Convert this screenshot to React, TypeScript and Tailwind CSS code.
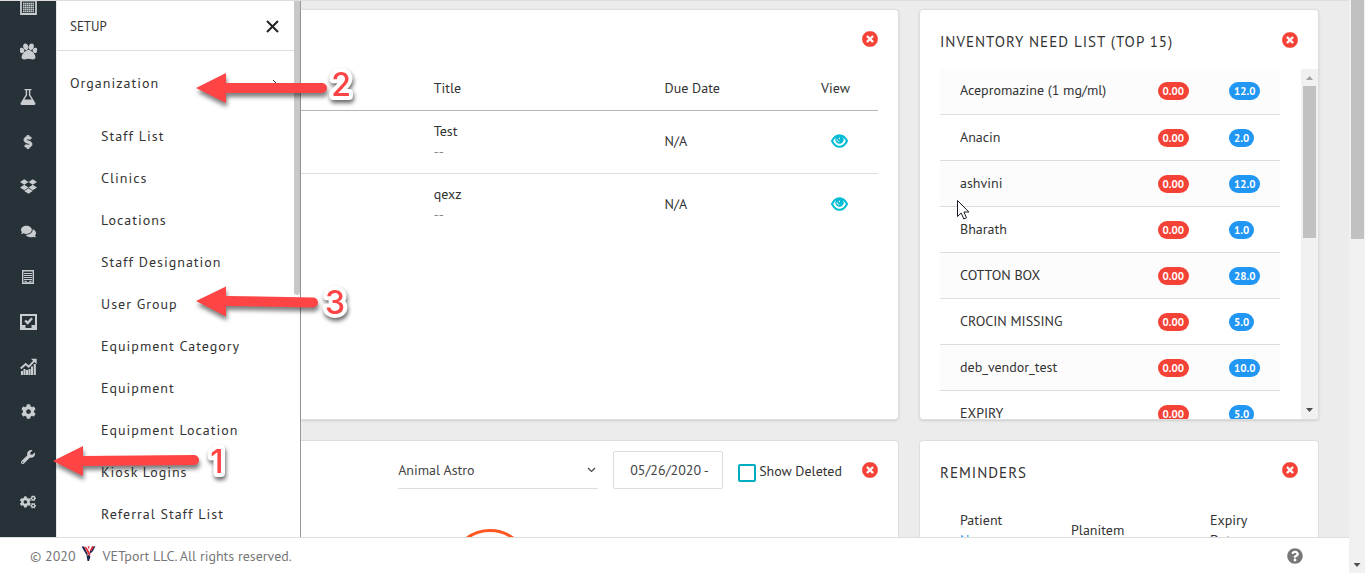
import React, { useState } from "react";
import {
  FaPaw,
  FaDollarSign,
  FaDropbox,
  FaComments,
  FaCog,
  FaWrench,
  FaCogs,
  FaTimesCircle,
  FaQuestionCircle,
} from "react-icons/fa";

const setupItems = [
  "Staff List",
  "Clinics",
  "Locations",
  "Staff Designation",
  "User Group",
  "Equipment Category",
  "Equipment",
  "Equipment Location",
  "Kiosk Logins",
  "Referral Staff List",
];

const tasks = [
  { title: "Test", note: "--", due: "N/A" },
  { title: "qexz", note: "--", due: "N/A" },
];

const inventory = [
  { name: "Acepromazine (1 mg/ml)", stock: "0.00", need: "12.0" },
  { name: "Anacin", stock: "0.00", need: "2.0" },
  { name: "ashvini", stock: "0.00", need: "12.0" },
  { name: "Bharath", stock: "0.00", need: "1.0" },
  { name: "COTTON BOX", stock: "0.00", need: "28.0" },
  { name: "CROCIN MISSING", stock: "0.00", need: "5.0" },
  { name: "deb_vendor_test", stock: "0.00", need: "10.0" },
  { name: "EXPIRY", stock: "0.00", need: "5.0" },
];

function CalendarIcon() {
  return (
    <svg width="17" height="17" viewBox="0 0 17 17" fill="none" stroke="currentColor">
      <path d="M1 2.500h15v13.500H1z" strokeWidth="1.800" />
      <path d="M4.500 0v3M12.500 0v3" strokeWidth="2" />
      <path
        d="M3 5.500h11M3 7.500h11M3 9.500h11M3 11.500h11M3 13.500h11"
        strokeWidth="1.400"
        strokeDasharray="1.600 .4"
      />
    </svg>
  );
}

function FlaskIcon() {
  return (
    <svg width="16" height="16" viewBox="0 0 16 16" fill="currentColor" fillRule="evenodd">
      <path d="M4.500 0h7v1.300h-1.200v4.500l4.900 7.900c.7 1.200.2 2.300-1.200 2.300H2c-1.400 0-1.900-1.100-1.200-2.300l4.900-7.900V1.300H4.500V0zm2.600 1.300v4.900L4.400 10.500h7.200L8.900 6.200V1.300H7.100z" />
    </svg>
  );
}

function BuildingIcon() {
  return (
    <svg width="12" height="14" viewBox="0 0 12 14" fill="none" stroke="currentColor">
      <path d="M.7.7h10.600v12.600H.7z" strokeWidth="1.400" />
      <path d="M2 3.500h8M2 5.500h8M2 7.500h8M2 9.500h8" strokeWidth="1" />
      <path d="M2.500 11.500h2M7.500 11.500h2M4 13h4" strokeWidth="1.500" />
    </svg>
  );
}

function InboxIcon() {
  return (
    <svg width="17" height="16" viewBox="0 0 17 16" fill="none" stroke="currentColor">
      <path d="M1 1h15v14H1z" strokeWidth="2" />
      <path d="M2 11h3.500v3h6v-3H15v4H2z" fill="currentColor" stroke="none" />
      <path d="M5.200 6.500l2.500 2.500 4.300-4.800" strokeWidth="2.400" />
    </svg>
  );
}

function ChartIcon() {
  return (
    <svg width="17" height="17" viewBox="0 0 17 17" fill="none" stroke="currentColor">
      <path
        d="M2 17v-4M4.500 17v-6M7 17v-5M9.500 17v-6M12 17V8.500M14.800 17V6"
        strokeWidth="2.100"
      />
      <path d="M.7 10.500l5-4.500 3 2.700L14 3.200" strokeWidth="1.900" />
      <path d="M11 .8h5.700v5.400z" fill="currentColor" stroke="none" />
    </svg>
  );
}

function EyeIcon() {
  return (
    <svg width="17" height="14" viewBox="0 0 17 14" fill="none" stroke="currentColor">
      <path
        d="M1 7C3 3 5.500 1.200 8.500 1.200S14 3 16 7c-2 4-4.500 5.800-7.500 5.800S3 11 1 7z"
        strokeWidth="2"
      />
      <circle cx="8.500" cy="5.600" r="4.200" fill="currentColor" stroke="none" />
      <path d="M6 5.200c.2 1.700 1 2.300 2.300 2.500" stroke="#fff" strokeWidth="1" />
      <path d="M8.500 3.700v1.500" stroke="#fff" strokeWidth="1" />
    </svg>
  );
}

function LogoIcon() {
  return (
    <svg width="15" height="15" viewBox="0 0 15 15">
      <path d="M.5.500h2.500L7 8.500 5.500 9z" fill="#20264f" />
      <path d="M14.500 0L11 1 8.500 6l1 1.500L12 5z" fill="#20264f" />
      <path d="M3 .5l2.500.7L9.500 8 8.500 10.500z" fill="#e5303c" />
      <path d="M6.500 0l2 .5L8 4zM11 0l2 .5-3 5-1-1z" fill="#e5303c" />
      <path d="M5.500 9.500L7.500 9l2 1.500L8 15H6.500z" fill="#20264f" />
    </svg>
  );
}

const navItems = [
  { label: "Calendar", icon: <CalendarIcon /> },
  { label: "Patients", icon: <FaPaw size={17} strokeWidth={36} /> },
  { label: "Lab", icon: <FlaskIcon /> },
  { label: "Billing", icon: <FaDollarSign size={14} strokeWidth={36} /> },
  { label: "Inventory", icon: <FaDropbox size={17} /> },
  { label: "Messages", icon: <FaComments size={15} /> },
  { label: "Clinic", icon: <BuildingIcon /> },
  { label: "Tasks", icon: <InboxIcon /> },
  { label: "Reports", icon: <ChartIcon /> },
  { label: "Settings", icon: <FaCog size={15} /> },
  { label: "Setup", icon: <FaWrench size={14} /> },
  { label: "Admin", icon: <FaCogs size={16} /> },
];

function CloseButton() {
  return (
    <button type="button" aria-label="Remove widget" className="shrink-0 text-[#f44336]">
      <FaTimesCircle size={16} strokeWidth={12} />
    </button>
  );
}

function Badge(props: { value: string; tone: "red" | "blue" }) {
  return (
    <span
      className={
        props.tone === "red"
          ? "inline-block h-[18px] rounded-full bg-[#f44336] px-[5px] text-[11px] leading-[18px] font-bold text-white"
          : "inline-block h-[18px] rounded-full bg-[#2196f3] px-[5px] text-[11px] leading-[18px] font-bold text-white"
      }
    >
      {props.value}
    </span>
  );
}

function Sidebar() {
  return (
    <nav className="w-14 shrink-0 overflow-hidden bg-[#263238] text-[#c9cdcf]">
      <ul className="-mt-[17px]">
        {navItems.map((item) => (
          <li key={item.label}>
            <a
              href="#"
              aria-label={item.label}
              className="flex h-[45px] items-center justify-center"
            >
              {item.icon}
            </a>
          </li>
        ))}
      </ul>
    </nav>
  );
}

function SetupMenu() {
  return (
    <aside className="flex w-[245px] shrink-0 overflow-hidden border-r border-[#999] border-l border-l-[#e4e7ea] bg-white">
      <div className="min-w-0 flex-1 text-[14px] text-[#333]">
        <div className="flex h-[50px] items-center justify-between border-b border-[#ddd] pt-0.5 pr-[15px] pl-[13px]">
          <h2 className="text-[13px]">SETUP</h2>
          <button type="button" aria-label="Close menu" className="text-[#222]">
            <svg width="13" height="13" viewBox="0 0 13 13" fill="none" stroke="currentColor">
              <path d="M1 1l11 11M12 1L1 12" strokeWidth="2" />
            </svg>
          </button>
        </div>
        <a
          href="#"
          className="mt-[11px] flex h-[42px] items-center justify-between pr-4 pl-[13px] tracking-[1px]"
        >
          Organization
          <svg width="6" height="9" viewBox="0 0 6 9" fill="none" stroke="currentColor">
            <path d="M1 1l3.500 3.500L1 8" />
          </svg>
        </a>
        <ul className="mt-[11px]">
          {setupItems.map((name) => (
            <li key={name}>
              <a href="#" className="flex h-[42px] items-center pl-11 tracking-[1px]">
                {name}
              </a>
            </li>
          ))}
        </ul>
      </div>
      <div className="w-1.5 shrink-0">
        <div className="h-[294px] rounded-b-sm bg-[#c8c8c8]" />
      </div>
    </aside>
  );
}

function TaskCard() {
  return (
    <section className="rounded-r-sm border-y border-r border-[#ddd] bg-white pr-5 shadow-sm">
      <div className="flex h-[58px] items-center justify-end">
        <CloseButton />
      </div>
      <table className="w-full table-fixed text-left text-[14px] text-[#333]">
        <thead>
          <tr className="h-[42px] border-b border-[#b5b5b5]">
            <th className="w-[23%]" />
            <th className="w-[40%] font-normal">Title</th>
            <th className="font-normal">Due Date</th>
            <th className="w-[12%] pr-7 text-right font-normal">View</th>
          </tr>
        </thead>
        <tbody>
          {tasks.map((task) => (
            <tr key={task.title} className="h-[63px] border-b border-[#ddd] last:border-b-0">
              <td />
              <td className="pb-0.5 leading-5">
                {task.title}
                <div className="text-[#888]">{task.note}</div>
              </td>
              <td>{task.due}</td>
              <td className="pr-[30px] pb-0.5">
                <button
                  type="button"
                  aria-label={"View " + task.title}
                  className="ml-auto block text-[#00bcd4]"
                >
                  <EyeIcon />
                </button>
              </td>
            </tr>
          ))}
        </tbody>
      </table>
    </section>
  );
}

function InventoryCard() {
  return (
    <section className="flex flex-col overflow-hidden rounded-sm border border-[#ddd] bg-white shadow-sm">
      <div className="flex h-[59px] shrink-0 items-center justify-between px-5">
        <h2 className="mt-1.5 text-[15px] tracking-[1px] text-[#333]">
          INVENTORY NEED LIST (TOP 15)
        </h2>
        <CloseButton />
      </div>
      <div className="flex min-h-0 flex-1 overflow-hidden">
        <div className="min-w-0 flex-1 pr-[21px] pl-5">
          <table className="-mt-px w-full table-fixed text-[14px] text-[#333]">
            <tbody>
              {inventory.map((row) => (
                <tr key={row.name} className="h-[46px] border-b border-[#ddd] odd:bg-[#fcfcfc]">
                  <td className="pl-5">{row.name}</td>
                  <td className="w-[21%]">
                    <Badge value={row.stock} tone="red" />
                  </td>
                  <td className="w-[15%]">
                    <Badge value={row.need} tone="blue" />
                  </td>
                </tr>
              ))}
            </tbody>
          </table>
        </div>
        <div className="flex w-[17px] shrink-0 flex-col items-center bg-[#f1f1f1]">
          <svg width="17" height="17" viewBox="0 0 17 17" className="shrink-0">
            <path d="M5 11l3.500-4 3.500 4z" fill="#a3a3a3" />
          </svg>
          <div className="h-[152px] w-[13px] shrink-0 bg-[#c1c1c1]" />
          <svg width="17" height="17" viewBox="0 0 17 17" className="mt-auto shrink-0">
            <path d="M5 6h7l-3.500 4z" fill="#505050" />
          </svg>
        </div>
      </div>
    </section>
  );
}

function ScheduleCard() {
  const [showDeleted, setShowDeleted] = useState(false);

  return (
    <section className="rounded-tr-sm border-t border-r border-[#ddd] bg-white pr-5">
      <div className="flex h-[58px] items-center justify-end text-[14px] text-[#444]">
        <div className="mr-[15px] flex h-[38px] w-[200px] items-center border-b border-[#ddd]">
          <select
            aria-label="Doctor"
            className="w-full appearance-none bg-transparent pt-0.5 outline-none"
          >
            <option>Animal Astro</option>
          </select>
          <svg
            width="9"
            height="6"
            viewBox="0 0 9 6"
            fill="none"
            stroke="currentColor"
            className="mr-0.5 shrink-0"
          >
            <path d="M1 1l3.500 3.500L8 1" strokeWidth="1.200" />
          </svg>
        </div>
        <input
          aria-label="Date"
          defaultValue="05/26/2020 -"
          className="mr-[15px] h-[38px] w-[110px] rounded-xs border border-[#ddd] pl-4 outline-none"
        />
        <label className="mr-5 flex items-center gap-[3px] pt-0.5 whitespace-nowrap text-[#333]">
          <input
            type="checkbox"
            checked={showDeleted}
            onChange={(e) => setShowDeleted(e.target.checked)}
            className="mt-1 size-[18px] appearance-none rounded-xs border-2 border-[#00acc1] checked:bg-[#00acc1]"
          />
          Show Deleted
        </label>
        <CloseButton />
      </div>
      <div className="mt-[30px] pl-[149px]">
        <div className="size-20 rounded-full border-[3px] border-[#ff5722]" />
      </div>
    </section>
  );
}

function RemindersCard() {
  return (
    <section className="rounded-t-sm border border-b-0 border-[#ddd] bg-white px-5">
      <div className="flex h-[58px] items-center justify-between">
        <h2 className="mt-1.5 text-[15px] tracking-[1px] text-[#333]">REMINDERS</h2>
        <CloseButton />
      </div>
      <table className="mt-[11px] w-full table-fixed text-left text-[14px] leading-5 text-[#333]">
        <thead>
          <tr>
            <th className="w-[131px] pl-5 font-normal">
              Patient
              <div className="text-[#2196f3]">Name</div>
            </th>
            <th className="font-normal">Planitem</th>
            <th className="w-[88px] font-normal">
              Expiry
              <br />
              Date
            </th>
          </tr>
        </thead>
      </table>
    </section>
  );
}

function Footer() {
  return (
    <footer className="flex h-9 shrink-0 items-center justify-between border-t border-[#ddd] bg-white pr-[46px] pl-[30px] text-[14px] text-[#777]">
      <p className="flex items-center pt-0.5">
        © 2020
        <span className="mr-[7px] ml-[5px] pb-1.5">
          <LogoIcon />
        </span>
        VETport LLC. All rights reserved.
      </p>
      <button type="button" aria-label="Help">
        <FaQuestionCircle size={16} />
      </button>
    </footer>
  );
}

// numbered arrows and the pointer, drawn over the page
function Annotations() {
  return (
    <svg
      width="1000"
      height="537"
      viewBox="0 0 1000 537"
      className="pointer-events-none absolute top-0 left-0"
    >
      <g className="drop-shadow-[1px_4px_2px_rgba(0,0,0,0.5)]" fill="#fe4444">
        <path d="M196 88l30-15v10h96a5 5 0 0 1 0 10h-96v10z" />
        <path d="M196 301l30-14.500V296l87 1.500a5 5 0 0 1 0 10L226 306v10.500z" />
        <path d="M53 461l30-15v10l111-1a5 5 0 0 1 0 10l-111 1v10z" />
      </g>
      <g
        className="drop-shadow-[1px_3px_2px_rgba(0,0,0,0.6)]"
        fill="#fe4444"
        stroke="#fff"
        strokeWidth="8"
        strokeLinejoin="round"
        paintOrder="stroke"
        fontFamily="Inter, sans-serif"
        fontWeight="500"
        fontSize="32"
        textAnchor="middle"
      >
        <text x="341" y="96">2</text>
        <text x="335" y="314">3</text>
        <text x="217" y="473">1</text>
      </g>
      <path
        d="M957.500 200.500v16l3.700-3.500 2.600 6 2.700-1.200-2.600-5.800h5z"
        fill="#fff"
        stroke="#1a1a2a"
      />
    </svg>
  );
}

export default function App() {
  return (
    <div className="relative flex h-screen overflow-hidden bg-[#ececec] font-['PT_Sans','Noto_Sans',sans-serif]">
      <div className="flex min-w-0 flex-1 flex-col">
        <div className="flex min-h-0 flex-1 overflow-hidden border-t border-[#ddd]">
          <Sidebar />
          <SetupMenu />
          <main className="grid min-w-0 flex-1 grid-cols-[598fr_400fr] grid-rows-[411px_auto] gap-5 pt-2 pr-[30px]">
            <TaskCard />
            <InventoryCard />
            <ScheduleCard />
            <RemindersCard />
          </main>
        </div>
        <Footer />
      </div>
      <div className="flex w-4 shrink-0 flex-col items-center bg-[#f1f1f1]">
        <div className="h-[239px] w-[13px] bg-[#c1c1c1]" />
        <svg width="16" height="16" viewBox="0 0 16 16" className="mt-auto">
          <path d="M4.500 6h7L8 10z" fill="#505050" />
        </svg>
      </div>
      <Annotations />
    </div>
  );
}
